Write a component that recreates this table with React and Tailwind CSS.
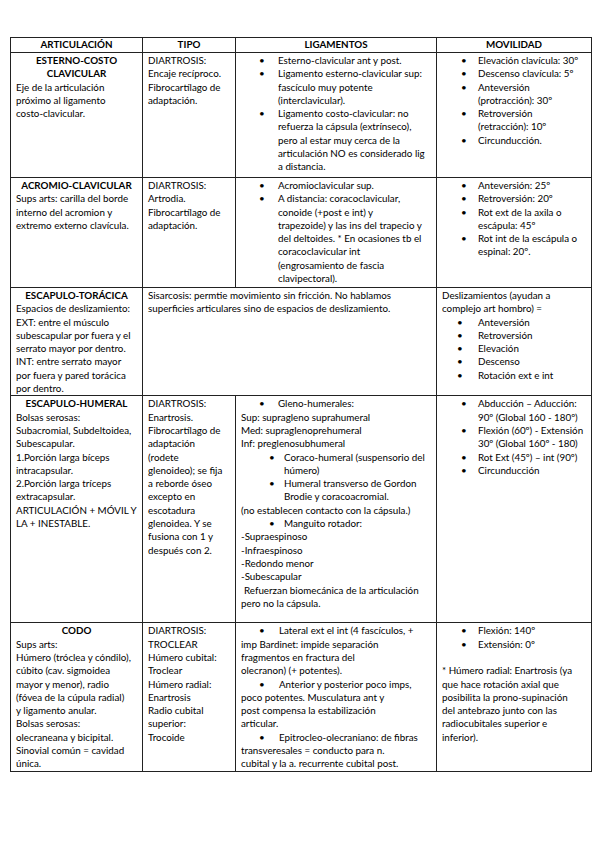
import React from "react";

const L = ({ children, className = "" }) => (
  <div className={`whitespace-nowrap ${className}`}>{children}</div>
);

const PADS = {
  lig: "pl-[18px] w-[37px]",
  sub: "pl-[28px] w-[43px]",
  mov: "pl-[19px] w-[36px]",
  des: "pl-[15px] w-[36px]",
};

function Bullet({ lines, variant = "lig" }) {
  return (
    <div className="flex">
      <span className={`shrink-0 ${PADS[variant]}`}>•</span>
      <div>
        {lines.map((t, i) => (
          <L key={i}>{t}</L>
        ))}
      </div>
    </div>
  );
}

// bullet only on the first line, continuation back at the left margin
function Hang({ lines }) {
  return (
    <div>
      <L>
        <span className="inline-block w-[38px] pl-[18px]">•</span>
        {lines[0]}
      </L>
      {lines.slice(1).map((t, i) => (
        <L key={i}>{t}</L>
      ))}
    </div>
  );
}

const Lines = ({ lines }) => lines.map((t, i) => <L key={i}>{t}</L>);

const Title = ({ children }) => (
  <div className="whitespace-nowrap text-center font-bold">{children}</div>
);

const td = "border border-[#222] align-top px-[5px] pt-[1px]";
const th = "border border-[#222] align-middle px-[5px] font-bold text-center";

export default function App() {
  return (
    <div className="min-h-screen bg-white pl-[10px] pt-[37px] font-[Lato,sans-serif] text-[9.8px] leading-[13.3px] text-black">
      <table className="table-fixed border-collapse w-[581px]">
        <colgroup>
          <col className="w-[132px]" />
          <col className="w-[93px]" />
          <col className="w-[201px]" />
          <col className="w-[155px]" />
        </colgroup>
        <thead>
          <tr className="h-[15px]">
            <th className={th}>ARTICULACIÓN</th>
            <th className={th}>TIPO</th>
            <th className={th}>LIGAMENTOS</th>
            <th className={th}>MOVILIDAD</th>
          </tr>
        </thead>
        <tbody>
          {/* esterno-costo clavicular */}
          <tr className="h-[125px]">
            <td className={td}>
              <Title>ESTERNO-COSTO</Title>
              <Title>CLAVICULAR</Title>
              <Lines lines={["Eje de la articulación", "próximo al ligamento", "costo-clavicular."]} />
            </td>
            <td className={td}>
              <Lines lines={["DIARTROSIS:", "Encaje recíproco.", "Fibrocartílago de", "adaptación."]} />
            </td>
            <td className={td}>
              <Bullet lines={["Esterno-clavicular ant y post."]} />
              <Bullet lines={["Ligamento esterno-clavicular sup:", "fascículo muy potente", "(interclavicular)."]} />
              <Bullet
                lines={[
                  "Ligamento costo-clavicular: no",
                  "refuerza la cápsula (extrínseco),",
                  "pero al estar muy cerca de la",
                  "articulación NO es considerado lig",
                  "a distancia.",
                ]}
              />
            </td>
            <td className={td}>
              <Bullet variant="mov" lines={["Elevación clavícula: 30º"]} />
              <Bullet variant="mov" lines={["Descenso clavícula: 5º"]} />
              <Bullet variant="mov" lines={["Anteversión", "(protracción): 30º"]} />
              <Bullet variant="mov" lines={["Retroversión", "(retracción): 10º"]} />
              <Bullet variant="mov" lines={["Circunducción."]} />
            </td>
          </tr>

          {/* acromio-clavicular */}
          <tr className="h-[110px]">
            <td className={td}>
              <Title>ACROMIO-CLAVICULAR</Title>
              <Lines lines={["Sups arts: carilla del borde", "interno del acromion y", "extremo externo clavícula."]} />
            </td>
            <td className={td}>
              <Lines lines={["DIARTROSIS:", "Artrodia.", "Fibrocartílago de", "adaptación."]} />
            </td>
            <td className={td}>
              <Bullet lines={["Acromioclavicular sup."]} />
              <Bullet
                lines={[
                  "A distancia: coracoclavicular,",
                  "conoide (+post e int) y",
                  "trapezoide) y las ins del trapecio y",
                  "del deltoides. * En ocasiones tb el",
                  "coracoclavicular int",
                  "(engrosamiento de fascia",
                  "clavipectoral).",
                ]}
              />
            </td>
            <td className={td}>
              <Bullet variant="mov" lines={["Anteversión: 25º"]} />
              <Bullet variant="mov" lines={["Retroversión: 20º"]} />
              <Bullet variant="mov" lines={["Rot ext de la axila o", "escápula: 45º"]} />
              <Bullet variant="mov" lines={["Rot int de la escápula o", "espinal: 20º."]} />
            </td>
          </tr>

          {/* escapulo-toracica */}
          <tr className="h-[108px]">
            <td className={td}>
              <Title>ESCAPULO-TORÁCICA</Title>
              <Lines
                lines={[
                  "Espacios de deslizamiento:",
                  "EXT: entre el músculo",
                  "subescapular por fuera y el",
                  "serrato mayor por dentro.",
                  "INT: entre serrato mayor",
                  "por fuera y pared torácica",
                  "por dentro.",
                ]}
              />
            </td>
            <td className={td} colSpan={2}>
              <Lines
                lines={[
                  "Sisarcosis: permtie movimiento sin fricción. No hablamos",
                  "superficies articulares sino de espacios de deslizamiento.",
                ]}
              />
            </td>
            <td className={td}>
              <Lines lines={["Deslizamientos (ayudan a", "complejo art hombro) ="]} />
              <Bullet variant="des" lines={["Anteversión"]} />
              <Bullet variant="des" lines={["Retroversión"]} />
              <Bullet variant="des" lines={["Elevación"]} />
              <Bullet variant="des" lines={["Descenso"]} />
              <Bullet variant="des" lines={["Rotación ext e int"]} />
            </td>
          </tr>

          {/* escapulo-humeral */}
          <tr className="h-[227px]">
            <td className={td}>
              <Title>ESCAPULO-HUMERAL</Title>
              <Lines
                lines={[
                  "Bolsas serosas:",
                  "Subacromial, Subdeltoidea,",
                  "Subescapular.",
                  "1.Porción larga bíceps",
                  "intracapsular.",
                  "2.Porción larga tríceps",
                  "extracapsular.",
                  "ARTICULACIÓN + MÓVIL Y",
                  "LA + INESTABLE.",
                ]}
              />
            </td>
            <td className={td}>
              <Lines
                lines={[
                  "DIARTROSIS:",
                  "Enartrosis.",
                  "Fibrocartílago de",
                  "adaptación",
                  "(rodete",
                  "glenoideo); se fija",
                  "a reborde óseo",
                  "excepto en",
                  "escotadura",
                  "glenoidea. Y se",
                  "fusiona con 1 y",
                  "después con 2.",
                ]}
              />
            </td>
            <td className={td}>
              <Bullet lines={["Gleno-humerales:"]} />
              <Lines lines={["Sup: supragleno suprahumeral", "Med: supraglenoprehumeral", "Inf: preglenosubhumeral"]} />
              <Bullet variant="sub" lines={["Coraco-humeral (suspensorio del", "húmero)"]} />
              <Bullet variant="sub" lines={["Humeral transverso de Gordon", "Brodie y coracoacromial."]} />
              <L>(no establecen contacto con la cápsula.)</L>
              <Bullet variant="sub" lines={["Manguito rotador:"]} />
              <Lines lines={["-Supraespinoso", "-Infraespinoso", "-Redondo menor", "-Subescapular"]} />
              <L className="pl-[3px]">Refuerzan biomecánica de la articulación</L>
              <L>pero no la cápsula.</L>
            </td>
            <td className={td}>
              <Bullet variant="mov" lines={["Abducción – Aducción:", "90º (Global 160 - 180º)"]} />
              <Bullet variant="mov" lines={["Flexión (60º) - Extensión", "30º (Global 160º - 180)"]} />
              <Bullet variant="mov" lines={["Rot Ext (45º) – int (90º)"]} />
              <Bullet variant="mov" lines={["Circunducción"]} />
            </td>
          </tr>

          {/* codo */}
          <tr className="h-[148px]">
            <td className={td}>
              <Title>CODO</Title>
              <Lines
                lines={[
                  "Sups arts:",
                  "Húmero (tróclea y cóndilo),",
                  "cúbito (cav. sigmoidea",
                  "mayor y menor), radio",
                  "(fóvea de la cúpula radial)",
                  "y ligamento anular.",
                  "Bolsas serosas:",
                  "olecraneana y bicipital.",
                  "Sinovial común = cavidad",
                  "única.",
                ]}
              />
            </td>
            <td className={td}>
              <Lines
                lines={[
                  "DIARTROSIS:",
                  "TROCLEAR",
                  "Húmero cubital:",
                  "Troclear",
                  "Húmero radial:",
                  "Enartrosis",
                  "Radio cubital",
                  "superior:",
                  "Trocoide",
                ]}
              />
            </td>
            <td className={td}>
              <Hang
                lines={[
                  "Lateral ext el int (4 fascículos, +",
                  "imp Bardinet: impide separación",
                  "fragmentos en fractura del",
                  "olecranon) (+ potentes).",
                ]}
              />
              <Hang
                lines={[
                  "Anterior y posterior poco imps,",
                  "poco potentes. Musculatura ant y",
                  "post compensa la estabilización",
                  "articular.",
                ]}
              />
              <Hang
                lines={[
                  "Epitrocleo-olecraniano: de fibras",
                  "transveresales = conducto para n.",
                  "cubital y la a. recurrente cubital post.",
                ]}
              />
            </td>
            <td className={td}>
              <Bullet variant="mov" lines={["Flexión: 140º"]} />
              <Bullet variant="mov" lines={["Extensión: 0º"]} />
              <L>&nbsp;</L>
              <Lines
                lines={[
                  "* Húmero radial: Enartrosis (ya",
                  "que hace rotación axial que",
                  "posibilita la prono-supinación",
                  "del antebrazo junto con las",
                  "radiocubitales superior e",
                  "inferior).",
                ]}
              />
            </td>
          </tr>
        </tbody>
      </table>
    </div>
  );
}
